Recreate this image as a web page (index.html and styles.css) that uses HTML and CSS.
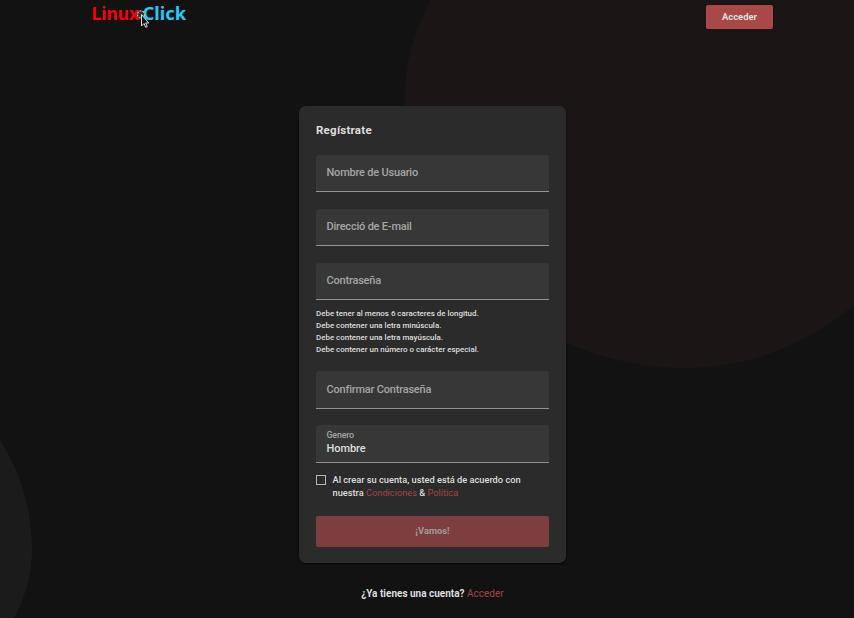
FILE: index.html
```html
<!DOCTYPE html>
<html lang="es">
<head>
<meta charset="utf-8">
<title>LinuxClick</title>
<link rel="stylesheet" href="styles.css">
</head>
<body>
<svg class="backdrop" viewBox="0 0 854 618" aria-hidden="true">
  <path class="blob-red" d="M404.5 100A280.5 237 0 0 1 685 -137A262 237 0 0 1 947 100A262 268 0 0 1 685 368A280.5 268 0 0 1 404.5 100Z"/>
  <path class="blob-gray" d="M-168 347A200 203 0 0 1 32 550A200 164 0 0 1 -168 714Z"/>
</svg>
<header class="topbar">
  <a class="logo">
    <svg width="96" height="30" viewBox="0 0 96 30">
      <text class="logo-linux" x="-0.5" y="20.4" textLength="47.5" lengthAdjust="spacingAndGlyphs">Linux</text>
      <text class="logo-click" x="50.5" y="20.4" textLength="43.5" lengthAdjust="spacingAndGlyphs">Click</text>
      <circle class="ring" cx="49" cy="14.5" r="3.6"/>
      <path class="pointer" d="M49.5 14.5V26L52 23.5L53.7 27.3L55.3 26.5L53.7 23H56.7Z"/>
    </svg>
  </a>
  <a class="signin">Acceder</a>
</header>
<main>
  <form class="card">
    <h1>Regístrate</h1>
    <div class="field">Nombre de Usuario</div>
    <div class="field">Direcció de E-mail</div>
    <div class="field">Contraseña</div>
    <ul class="hints">
      <li>Debe tener al menos 6 caracteres de longitud.</li>
      <li>Debe contener una letra minúscula.</li>
      <li>Debe contener una letra mayúscula.</li>
      <li>Debe contener un número o carácter especial.</li>
    </ul>
    <div class="field confirm">Confirmar Contraseña</div>
    <div class="field select"><span class="caption">Genero</span><span class="value">Hombre</span></div>
    <div class="terms"><span class="box"></span><p>Al crear su cuenta, usted está de acuerdo con<br>nuestra <a>Condiciones</a> &amp; <a>Política</a></p></div>
    <div class="submit">¡Vamos!</div>
  </form>
  <p class="login">¿Ya tienes una cuenta? <a>Acceder</a></p>
</main>
</body>
</html>
```
FILE: styles.css
```css
* { box-sizing: border-box; margin: 0; padding: 0; }
body {
  height: 618px;
  overflow: hidden;
  background: #121212;
  color: #dedede;
  font-family: Roboto, sans-serif;
  font-weight: 500;
}
.backdrop { position: absolute; top: 0; left: 0; width: 854px; height: 618px; z-index: -1; }
.blob-red { fill: #1c1515; }
.blob-gray { fill: #1b1b1b; }
.topbar {
  display: flex;
  justify-content: space-between;
  align-items: flex-start;
  height: 106px;
  padding: 0 81px 0 92px;
}
.logo svg { display: block; }
.logo text { font: 700 18px "Noto Sans", sans-serif; }
.logo .logo-linux { fill: #fa0000; }
.logo .logo-click { fill: #2bc8f5; }
.ring { fill: #333; stroke: #bbb; stroke-width: 1.3; stroke-dasharray: 2 1; }
.pointer { fill: #161313; stroke: #ddd; stroke-width: 1; }
.signin {
  width: 67px;
  height: 24px;
  margin-top: 5px;
  border-radius: 2px;
  background: #a84849;
  font-size: 9.4px;
  font-weight: 700;
  line-height: 24px;
  text-align: center;
}
.card {
  width: 267px;
  height: 457px;
  margin-left: 299px;
  padding: 17px 17px 0;
  border-radius: 7px;
  background: #2b2b2b;
  box-shadow: 0 1px 2px rgba(0, 0, 0, .65);
}
h1 { height: 32px; font-size: 11.5px; letter-spacing: .25px; line-height: 14px; font-weight: 700; }
.field {
  height: 37px;
  margin-bottom: 17px;
  padding-left: 10.5px;
  border-bottom: 1px solid #929292;
  border-radius: 3px 3px 0 0;
  background: #373737;
  color: #a5a5a5;
  font-size: 11px;
  letter-spacing: -.2px;
  line-height: 35px;
}
.hints { height: 53px; margin-top: -9px; list-style: none; font-size: 7.95px; line-height: 12px; }
.confirm { height: 38px; margin-top: 10px; margin-bottom: 16px; line-height: 37px; }
.select { display: flex; flex-direction: column; height: 38px; margin-bottom: 11px; padding-top: 4px; }
.caption { font-size: 8.9px; line-height: 12px; }
.value { color: #dedede; font-size: 11px; letter-spacing: -.05px; line-height: 15px; }
.terms { display: flex; gap: 6.5px; height: 42px; font-size: 9.25px; line-height: 13px; }
.terms p { margin-top: -1px; }
.box { width: 10px; height: 10px; margin-top: 1px; border: 1px solid #b5b5b5; }
a { color: inherit; }
p a { color: #a34448; font-weight: 400; }
.submit {
  height: 31px;
  border-radius: 2px;
  background: #7e3e3f;
  color: #a59a9a;
  font-size: 9.4px;
  font-weight: 700;
  line-height: 30px;
  text-align: center;
}
.login { width: 267px; margin: 24px 0 0 299px; font-size: 10px; font-weight: 700; line-height: 14px; text-align: center; }
```
